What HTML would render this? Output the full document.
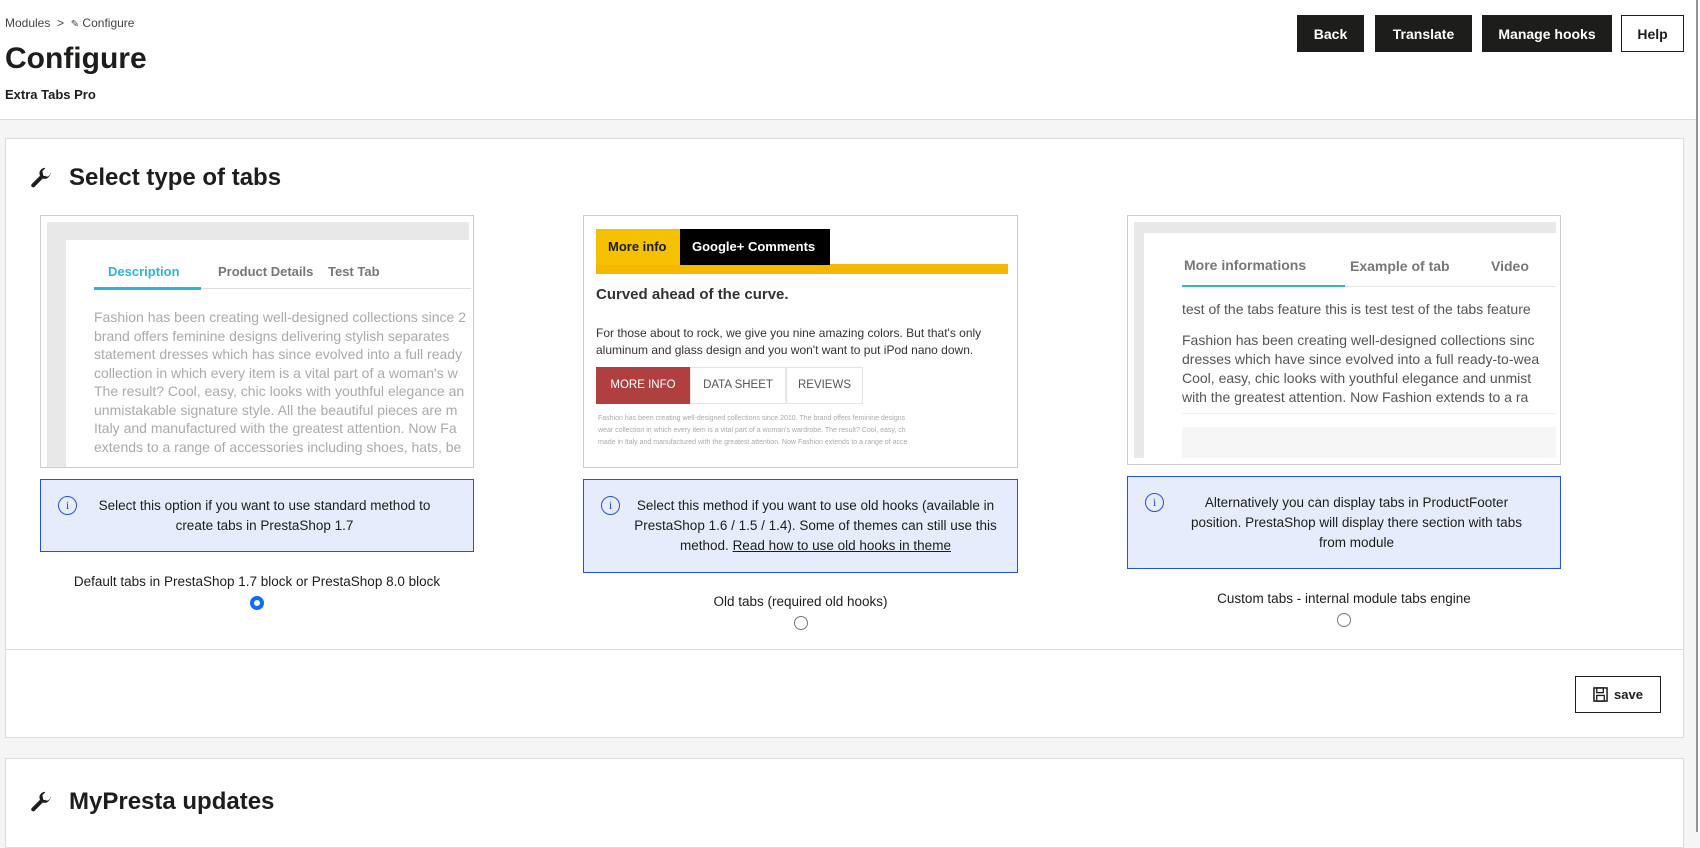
<!DOCTYPE html>
<html><head><meta charset="utf-8"><style>
*{box-sizing:border-box;margin:0;padding:0}
body{width:1700px;height:832px;overflow:hidden;background:#f5f5f5;font-family:"Liberation Sans",sans-serif;color:#1d1d1b;position:relative}
.abs{position:absolute}
.header{left:0;top:0;width:1696px;height:120px;background:#fff;border-bottom:1px solid #dcdcdc}
.btn{position:absolute;top:15px;height:37px;background:#1d1d1b;color:#fff;font-weight:bold;font-size:14px;display:flex;align-items:center;justify-content:center}
.card{position:absolute;left:5px;width:1679px;background:#fff;border:1px solid #dcdcdc}
.shot{position:absolute;border:1px solid #ccc;background:#fff;overflow:hidden}
.info{position:absolute;border:1px solid #2450e0;background:#e6ecfb;font-size:13.5px;line-height:20px;text-align:center;color:#1d1d1b}
.info .ic{position:absolute;left:17px;top:16px;width:19px;height:19px;border:1.5px solid #2450e0;border-radius:50%;color:#2450e0;font-size:12px;line-height:16px;text-align:center;font-family:"Liberation Serif",serif}
.lbl{position:absolute;font-size:13.5px;text-align:center}
.radio{position:absolute;width:14px;height:14px;border:1px solid #777;border-radius:50%;background:#fff}
.fade{color:#aaa;font-size:14px;line-height:20px;white-space:nowrap}
</style></head><body>
<div class="abs header">
  <div class="abs" style="left:5px;top:16px;font-size:12px;color:#444">Modules &nbsp;&gt;&nbsp; <span style="font-size:10px">✎</span> Configure</div>
  <div class="abs" style="left:5px;top:42px;font-size:30px;font-weight:bold;color:#1d1d1b">Configure</div>
  <div class="abs" style="left:5px;top:87px;font-size:13px;font-weight:bold">Extra Tabs Pro</div>
  <div class="btn" style="left:1297px;width:67px">Back</div>
  <div class="btn" style="left:1375px;width:97px">Translate</div>
  <div class="btn" style="left:1482px;width:130px">Manage hooks</div>
  <div class="btn" style="left:1621px;width:63px;background:#fff;color:#1d1d1b;border:1.5px solid #1d1d1b">Help</div>
</div>
<div class="abs" style="left:1696px;top:0;width:4px;height:832px;background:#fff;border-left:2px solid #9a9090"></div>

<div class="card" style="top:138px;height:600px">
  <svg class="abs" style="left:24px;top:28px" width="22" height="22" viewBox="0 0 24 24"><path d="M22 7a6 6 0 0 1-8 5.6L5 21.5a2.1 2.1 0 0 1-3-3l8.9-9A6 6 0 0 1 17 1l-3.5 3.5 1 5 5 1L23 7z" fill="#1d1d1b"/></svg>
  <div class="abs" style="left:63px;top:25px;font-size:24px;font-weight:bold">Select type of tabs</div>
  <div class="abs" style="left:0;top:510px;width:1677px;height:1px;background:#dcdcdc"></div>
  <div class="abs" style="left:1569px;top:537px;width:86px;height:37px;border:1.5px solid #1d1d1b;font-size:13px;font-weight:bold;display:flex;align-items:center;justify-content:center;gap:6px"><svg width="15" height="15" viewBox="0 0 16 16"><rect x="1" y="1" width="14" height="14" fill="none" stroke="#1d1d1b" stroke-width="1.6"/><rect x="4" y="1" width="7" height="5" fill="none" stroke="#1d1d1b" stroke-width="1.4"/><rect x="4" y="9" width="8" height="6" fill="none" stroke="#1d1d1b" stroke-width="1.4"/></svg>save</div>
</div>

<!-- panel 1 -->
<div class="shot" style="left:40px;top:215px;width:434px;height:253px">
  <div class="abs" style="left:6px;top:6px;width:422px;height:246px;background:#e8e8e8"></div>
  <div class="abs" style="left:25px;top:24px;width:403px;height:228px;background:#fff">
    <div class="abs" style="left:28px;top:47px;width:107px;height:3px;background:#2fb5d2"></div>
    <div class="abs" style="left:135px;top:48px;width:270px;height:1px;background:#ddd"></div>
    <div class="abs" style="left:42px;top:24px;font-weight:bold;font-size:13px;color:#2fb5d2">Description</div>
    <div class="abs" style="left:152px;top:24px;font-weight:bold;font-size:13px;color:#777">Product Details</div>
    <div class="abs" style="left:262px;top:24px;font-weight:bold;font-size:13px;color:#777">Test Tab</div>
    <div class="abs fade" style="left:28px;top:68px;font-size:14px;line-height:18.5px">Fashion has been creating well-designed collections since 2<br>brand offers feminine designs delivering stylish separates<br>statement dresses which has since evolved into a full ready<br>collection in which every item is a vital part of a woman's w<br>The result? Cool, easy, chic looks with youthful elegance an<br>unmistakable signature style. All the beautiful pieces are m<br>Italy and manufactured with the greatest attention. Now Fa<br>extends to a range of accessories including shoes, hats, be</div>
  </div>
</div>
<div class="info" style="left:40px;top:479px;width:434px;height:73px;padding:16px 40px 0 55px"><span class="ic">i</span>Select this option if you want to use standard method to create tabs in PrestaShop 1.7</div>
<div class="lbl" style="left:40px;top:574px;width:434px">Default tabs in PrestaShop 1.7 block or PrestaShop 8.0 block</div>
<div class="radio" style="left:250px;top:596px;border:4px solid #0d6efd;background:#fff"></div>

<!-- panel 2 -->
<div class="shot" style="left:583px;top:215px;width:435px;height:253px">
  <div class="abs" style="left:12px;top:48px;width:412px;height:10px;background:#f5b800"></div>
  <div class="abs" style="left:12px;top:13px;width:84px;height:36px;background:#f5c000;font-weight:bold;font-size:13px;line-height:36px;padding-left:12px">More info</div>
  <div class="abs" style="left:96px;top:13px;width:150px;height:36px;background:#000;color:#fff;font-weight:bold;font-size:13px;line-height:36px;padding-left:12px">Google+ Comments</div>
  <div class="abs" style="left:12px;top:70px;font-weight:bold;font-size:15px;color:#333">Curved ahead of the curve.</div>
  <div class="abs" style="left:12px;top:109px;font-size:12px;line-height:17px;color:#333;white-space:nowrap">For those about to rock, we give you nine amazing colors. But that's only<br>aluminum and glass design and you won't want to put iPod nano down.</div>
  <div class="abs" style="left:12px;top:151px;width:94px;height:37px;background:#b04040;color:#fff;font-size:11.5px;line-height:37px;text-align:center">MORE INFO</div>
  <div class="abs" style="left:106px;top:151px;width:96px;height:37px;border:1px solid #e5e5e5;color:#555;font-size:11.5px;line-height:35px;text-align:center">DATA SHEET</div>
  <div class="abs" style="left:202px;top:151px;width:77px;height:37px;border:1px solid #e5e5e5;color:#555;font-size:11.5px;line-height:35px;text-align:center">REVIEWS</div>
  <div class="abs" style="left:14px;top:197px;font-size:7px;line-height:12px;color:#aaa;white-space:nowrap">Fashion has been creating well-designed collections since 2010. The brand offers feminine designs<br>wear collection in which every item is a vital part of a woman's wardrobe. The result? Cool, easy, ch<br>made in Italy and manufactured with the greatest attention. Now Fashion extends to a range of acce</div>
</div>
<div class="info" style="left:583px;top:479px;width:435px;height:94px;padding:16px 20px 0 50px"><span class="ic">i</span>Select this method if you want to use old hooks (available in PrestaShop 1.6 / 1.5 / 1.4). Some of themes can still use this method. <u>Read how to use old hooks in theme</u></div>
<div class="lbl" style="left:583px;top:594px;width:435px">Old tabs (required old hooks)</div>
<div class="radio" style="left:794px;top:616px"></div>

<!-- panel 3 -->
<div class="shot" style="left:1127px;top:215px;width:434px;height:250px">
  <div class="abs" style="left:6px;top:6px;width:422px;height:236px;background:#e8e8e8"></div>
  <div class="abs" style="left:16px;top:17px;width:412px;height:225px;background:#fff">
    <div class="abs" style="left:40px;top:24px;font-weight:bold;font-size:14px;color:#777">More informations</div>
    <div class="abs" style="left:206px;top:25px;font-weight:bold;font-size:14px;color:#777">Example of tab</div>
    <div class="abs" style="left:347px;top:25px;font-weight:bold;font-size:14px;color:#777">Video</div>
    <div class="abs" style="left:38px;top:52px;width:163px;height:2px;background:#2fb5d2"></div>
    <div class="abs" style="left:201px;top:53px;width:211px;height:1px;background:#e5e5e5"></div>
    <div class="abs" style="left:38px;top:68px;font-size:14px;color:#555;white-space:nowrap">test of the tabs feature this is test test of the tabs feature</div>
    <div class="abs" style="left:38px;top:98px;font-size:14px;line-height:19px;color:#555;white-space:nowrap">Fashion has been creating well-designed collections sinc<br>dresses which have since evolved into a full ready-to-wea<br>Cool, easy, chic looks with youthful elegance and unmist<br>with the greatest attention. Now Fashion extends to a ra</div>
    <div class="abs" style="left:38px;top:180px;width:374px;height:1px;background:#eee"></div>
    <div class="abs" style="left:38px;top:194px;width:374px;height:31px;background:#f6f6f6"></div>
  </div>
</div>
<div class="info" style="left:1127px;top:476px;width:434px;height:93px;padding:16px 35px 0 60px"><span class="ic">i</span>Alternatively you can display tabs in ProductFooter position. PrestaShop will display there section with tabs from module</div>
<div class="lbl" style="left:1127px;top:591px;width:434px">Custom tabs - internal module tabs engine</div>
<div class="radio" style="left:1337px;top:613px"></div>

<div class="card" style="top:758px;height:90px">
  <svg class="abs" style="left:24px;top:32px" width="22" height="22" viewBox="0 0 24 24"><path d="M22 7a6 6 0 0 1-8 5.6L5 21.5a2.1 2.1 0 0 1-3-3l8.9-9A6 6 0 0 1 17 1l-3.5 3.5 1 5 5 1L23 7z" fill="#1d1d1b"/></svg>
  <div class="abs" style="left:63px;top:29px;font-size:24px;font-weight:bold">MyPresta updates</div>
</div>
</body></html>
